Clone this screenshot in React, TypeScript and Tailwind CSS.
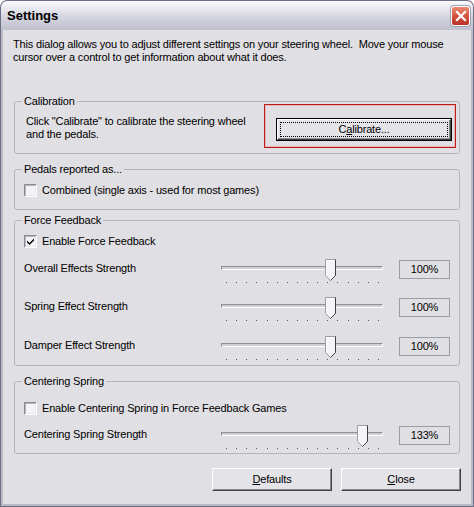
import React from "react";

function CheckBox({ checked }: { checked?: boolean }) {
  return (
    <div className="w-[13px] h-[13px] border border-t-[#8c8c94] border-l-[#8c8c94] border-r-white border-b-white shrink-0">
      <div className="w-full h-full border border-t-[#b4b4bc] border-l-[#b4b4bc] border-r-[#e8e8ec] border-b-[#e8e8ec] bg-[#f4f4f4] flex items-center justify-center">
        {checked && (
          <svg width="9" height="9" viewBox="0 0 9 9">
            <path d="M1 3.5 L3.5 6 L8 1.5 V3.5 L3.5 8 L1 5.5 Z" fill="#000" />
          </svg>
        )}
      </div>
    </div>
  );
}

function Slider({ value }: { value: number }) {
  const pct = value / 150;
  const center = 17 + pct * 145.5;
  const ticks = Array.from({ length: 16 }, (_, i) => 10 + (i * 152) / 15);
  return (
    <div className="relative w-[172px] h-[30px] shrink-0">
      <div className="absolute left-[5px] top-[8px] w-[162px] h-[4px] border border-t-[#8e8e94] border-l-[#8e8e94] border-r-white border-b-white bg-[#cfcfd4]" />
      {ticks.map((t, i) => (
        <div
          key={i}
          className="absolute top-[24px] w-px h-px bg-[#555]"
          style={{ left: Math.round(t) }}
        />
      ))}
      <svg
        className="absolute top-[1px]"
        style={{ left: Math.round(center - 5.5) }}
        width="11"
        height="22"
        viewBox="0 0 11 22"
      >
        <path d="M0.5 0.5 H10.5 V16.5 L5.5 21.5 L0.5 16.5 Z" fill="#f4f4f6" stroke="#9a9aa0" />
        <path d="M1.5 1.5 H9.5 M1.5 1.5 V16.5" stroke="#ffffff" fill="none" />
        <path d="M10.5 0.5 V16.5 L5.5 21.5" stroke="#404044" fill="none" />
      </svg>
    </div>
  );
}

function SliderRow({ label, value, className = "" }: { label: string; value: number; className?: string }) {
  return (
    <div className={"flex items-start h-[30px] " + className}>
      <div className="w-[201px] pl-[9px] mt-[4px] leading-[13px] shrink-0">{label}</div>
      <Slider value={value} />
      <div className="ml-[11px] mt-[2px] w-[51px] h-[19px] border border-[#9c9ca6] flex items-center justify-center leading-[13px]">
        {value}%
      </div>
    </div>
  );
}

function Group({ title, className = "", children }: { title: string; className?: string; children?: React.ReactNode }) {
  return (
    <fieldset className={"border border-[#b4b4bc] rounded-[3px] " + className}>
      <legend className="ml-[7px] px-[2px] leading-[14px]">{title}</legend>
      {children}
    </fieldset>
  );
}

function ClassicButton({ children, className = "" }: { children: React.ReactNode; className?: string }) {
  return (
    <div
      className={
        "h-[23px] bg-[#e4e3e7] border border-t-white border-l-white border-r-[#404040] border-b-[#404040] shadow-[inset_-1px_-1px_0_#8a8a8e] flex items-center justify-center leading-[13px] " +
        className
      }
    >
      {children}
    </div>
  );
}

export default function App() {
  return (
    <div className="w-[474px] h-[507px] font-['Liberation_Sans',Arial,sans-serif] text-[11px] text-black bg-[#6c6c82] rounded-t-[7px] p-px flex flex-col">
      {/* title bar */}
      <div className="h-[29px] rounded-t-[6px] bg-linear-to-b from-[#fbfbfd] via-[#d8d8e2] to-[#bfbfcd] flex items-center pl-[6px] pr-[3px] shrink-0">
        <div className="font-bold text-[13px] leading-[16px] mt-[1px]">Settings</div>
        <div className="ml-auto w-[19px] h-[20px] rounded-[3px] border border-white bg-linear-to-b from-[#ec8a72] via-[#d4533d] to-[#b8302a] flex items-center justify-center shadow-[0_0_0_1px_#a0a0b0]">
          <svg width="12" height="12" viewBox="0 0 12 12">
            <path d="M2 2 L10 10 M10 2 L2 10" stroke="#fff" strokeWidth="2.2" strokeLinecap="square" />
          </svg>
        </div>
      </div>
      {/* body */}
      <div className="flex-1 bg-[#e0dfe3] border-x-[2px] border-b-[2px] border-[#b9b9c8] pl-[11px] pr-[11px] pt-[8px] flex flex-col tracking-[-0.17px]">
        <div className="leading-[13px] -ml-px">
          This dialog allows you to adjust different settings on your steering wheel.{"\u00a0"} Move your mouse
          <br />
          cursor over a control to get information about what it does.
        </div>

        <Group title="Calibration" className="mt-[30px] h-[60px]">
          <div className="flex -mt-[4px]">
            <div className="flex-1 pl-[11px] pt-[11px] leading-[13px]">
              Click "Calibrate" to calibrate the steering wheel
              <br />
              and the pedals.
            </div>
            <div className="w-[192px] h-[44px] mr-[3px] border border-[#b81c1c] shadow-[inset_0_0_0_1px_#f2b0b0] pt-[13px] pr-[3px] flex justify-end">
              <div className="w-[176px] h-[23px] border border-black">
                <div className="h-full bg-[#e4e3e7] border border-t-white border-l-white border-r-[#404040] border-b-[#404040] shadow-[inset_-1px_-1px_0_#8a8a8e] p-[2px]">
                  <div className="h-full border border-dotted border-black flex items-center justify-center leading-[13px]">
                    C<span className="underline">a</span>librate...
                  </div>
                </div>
              </div>
            </div>
          </div>
        </Group>

        <Group title="Pedals reported as..." className="mt-[8px] h-[48px]">
          <div className="flex items-center h-[13px] mt-[8px] pl-[9px] gap-[5px]">
            <CheckBox />
            <span className="leading-[13px]">Combined (single axis - used for most games)</span>
          </div>
        </Group>

        <Group title="Force Feedback" className="mt-[3px] h-[153px]">
          <div className="flex items-center h-[13px] mt-[8px] pl-[9px] gap-[5px]">
            <CheckBox checked />
            <span className="leading-[13px]">Enable Force Feedback</span>
          </div>
          <SliderRow label="Overall Effects Strength" value={100} className="mt-[10px]" />
          <SliderRow label="Spring Effect Strength" value={100} className="mt-[8px]" />
          <SliderRow label="Damper Effect Strength" value={100} className="mt-[9px]" />
        </Group>

        <Group title="Centering Spring" className="mt-[8px] h-[80px]">
          <div className="flex items-center h-[13px] mt-[14px] pl-[9px] gap-[5px]">
            <CheckBox />
            <span className="leading-[13px]">Enable Centering Spring in Force Feedback Games</span>
          </div>
          <SliderRow label="Centering Spring Strength" value={133} className="mt-[9px]" />
        </Group>

        <div className="flex justify-end gap-[9px] mt-[14px] -mr-px">
          <ClassicButton className="w-[120px]">
            <span className="underline">D</span>efaults
          </ClassicButton>
          <ClassicButton className="w-[120px]">
            <span className="underline">C</span>lose
          </ClassicButton>
        </div>
      </div>
    </div>
  );
}
